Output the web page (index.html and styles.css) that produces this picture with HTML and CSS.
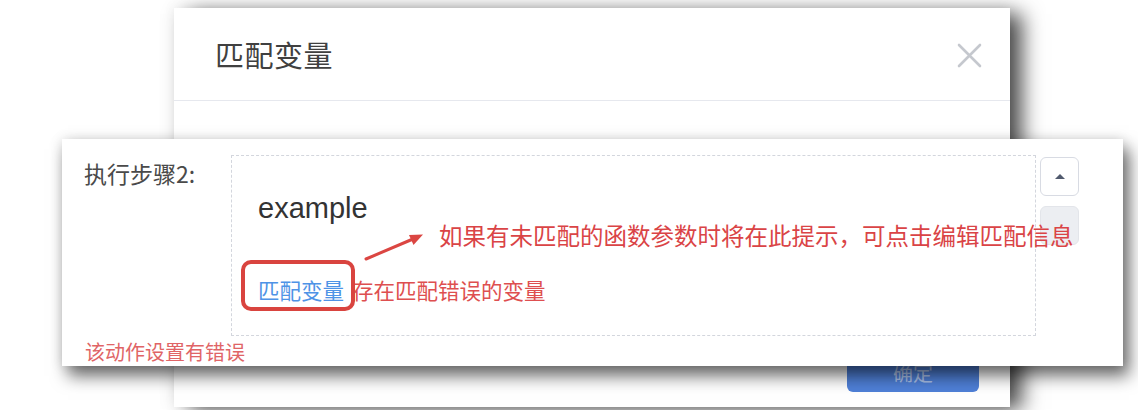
FILE: index.html
```html
<!DOCTYPE html>
<html lang="zh-CN">
<head>
<meta charset="utf-8">
<title>匹配变量</title>
<link rel="stylesheet" href="styles.css">
</head>
<body>
<div class="stage">
  <div class="modal">
    <div class="modal-header">
      <span class="modal-title">匹配变量</span>
      <svg class="close" width="25" height="25" viewBox="0 0 25 25" aria-hidden="true">
        <path d="M2 2 L23 23 M23 2 L2 23" stroke="#c5c8ce" stroke-width="2.6" stroke-linecap="round" fill="none"/>
      </svg>
    </div>
    <div class="modal-body"></div>
    <div class="modal-footer">
      <button class="btn-primary">确定</button>
    </div>
  </div>

  <div class="card">
    <div class="row">
      <div class="label">执行步骤2:</div>
      <div class="dashed">
        <div class="example">example</div>
        <div class="match-row">
          <a class="link">匹配变量</a><span class="err-inline">存在匹配错误的变量</span>
        </div>
      </div>
      <div class="side-btns">
        <div class="sbtn">
          <svg width="12" height="7" viewBox="0 0 12 7" aria-hidden="true"><path d="M1 6 L6 1 L11 6 Z" fill="#515a6e"/></svg>
        </div>
        <div class="sbtn sbtn-off"></div>
      </div>
    </div>
    <div class="err-text">该动作设置有错误</div>

    <div class="mark-box"></div>
    <svg class="arrow" width="65" height="35" viewBox="0 0 65 35" aria-hidden="true">
      <line x1="4" y1="30" x2="51" y2="10" stroke="#db4642" stroke-width="3" stroke-linecap="round"/>
      <path d="M61 5.5 L51.5 16 L47 6 Z" fill="#db4642"/>
    </svg>
    <div class="annotation">如果有未匹配的函数参数时将在此提示，可点击编辑匹配信息</div>
  </div>
</div>
</body>
</html>
```

FILE: styles.css
```css
html, body {
  margin: 0;
  padding: 0;
  background: #ffffff;
}

body {
  font-family: "Noto Sans CJK SC", "Noto Sans", sans-serif;
}

.stage {
  position: relative;
  width: 1138px;
  height: 410px;
  overflow: hidden;
  background: #ffffff;
}

/* underlying modal window */
.modal {
  position: absolute;
  left: 174px;
  top: 8px;
  width: 836px;
  height: 399px;
  background: #ffffff;
  display: flex;
  flex-direction: column;
  box-shadow: 14px 4px 20px -2px rgba(0, 0, 0, 0.7), 0 0 16px rgba(0, 0, 0, 0.10);
}

.modal-header {
  height: 92px;
  border-bottom: 1px solid #e6e8ee;
  display: flex;
  align-items: center;
  justify-content: space-between;
  padding: 0 28px 0 41px;
}

.modal-title {
  font-size: 29px;
  color: #404040;
  letter-spacing: 0.5px;
}

.close {
  display: block;
  margin-top: 2px;
}

.modal-body {
  flex: 1;
}

.modal-footer {
  display: flex;
  justify-content: flex-end;
  padding: 0 31px 15px 0;
}

.btn-primary {
  width: 132px;
  height: 40px;
  border: none;
  border-radius: 6px;
  background: #4f80d8;
  color: rgba(255, 255, 255, 0.55);
  font-family: "Noto Sans CJK SC", sans-serif;
  font-size: 20px;
}

/* overlay card */
.card {
  position: absolute;
  left: 62px;
  top: 139px;
  width: 1061px;
  height: 227px;
  box-sizing: border-box;
  padding: 16px 0 0 22px;
  background: #ffffff;
  box-shadow: 6px 10px 16px rgba(0, 0, 0, 0.58), 0 0 12px rgba(0, 0, 0, 0.12);
}

.row {
  display: flex;
  align-items: flex-start;
}

.label {
  width: 147px;
  font-size: 23px;
  line-height: 36px;
  color: #4a4a4a;
}

.dashed {
  width: 805px;
  height: 181px;
  box-sizing: border-box;
  border: 1px dashed #d3d6dd;
  padding: 32px 0 0 26px;
}

.example {
  font-family: "Liberation Sans", "Noto Sans", sans-serif;
  font-size: 29px;
  line-height: 40px;
  color: #333333;
}

.match-row {
  margin-top: 47px;
  display: flex;
  align-items: center;
  font-size: 21.5px;
  line-height: 30px;
}

.link {
  color: #4e93e6;
}

.err-inline {
  margin-left: 8px;
  color: #de4f50;
}

.side-btns {
  margin-left: 4px;
  margin-top: 2px;
  display: flex;
  flex-direction: column;
  gap: 10px;
}

.sbtn {
  width: 39px;
  height: 39px;
  box-sizing: border-box;
  border: 1px solid #d8dbe3;
  border-radius: 6px;
  background: #ffffff;
  display: flex;
  align-items: center;
  justify-content: center;
}

.sbtn-off {
  background: #eceef2;
  border-color: #e3e5ea;
}

.err-text {
  margin-top: 4px;
  margin-left: 1px;
  font-size: 20px;
  line-height: 24px;
  color: #e06466;
}

/* annotations drawn over the card */
.mark-box {
  position: absolute;
  left: 179px;
  top: 121px;
  width: 114px;
  height: 51px;
  box-sizing: border-box;
  border: 4px solid #d9443f;
  border-radius: 10px;
}

.arrow {
  position: absolute;
  left: 300px;
  top: 90px;
}

.annotation {
  position: absolute;
  left: 377px;
  top: 81px;
  font-size: 23.5px;
  line-height: 30px;
  color: #da4446;
  white-space: nowrap;
}
```
